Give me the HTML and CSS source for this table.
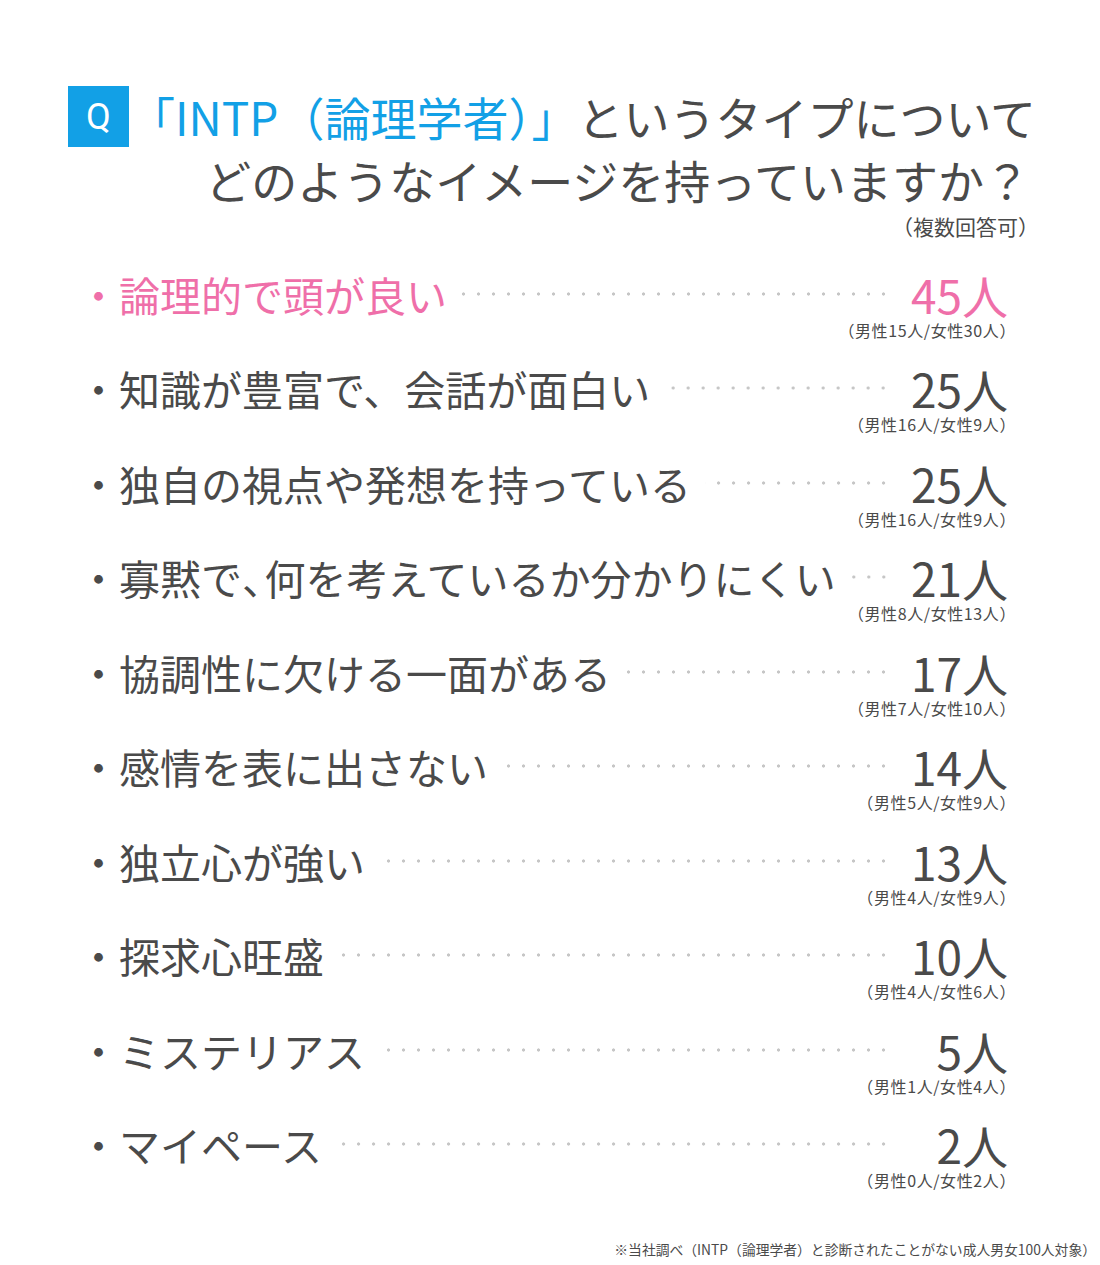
FILE: index.html
```html
<!DOCTYPE html>
<html lang="ja">
<head>
<meta charset="utf-8">
<title>INTP（論理学者）のイメージ</title>
<link rel="stylesheet" href="styles.css">
</head>
<body>
<div class="page">
  <div class="title">
    <div class="line1">
      <span class="qbox">Q</span>
      <span class="t1"><span class="blue">「INTP（論理学者）」</span>というタイプについて</span>
    </div>
    <div class="line2">どのようなイメージを持っていますか？</div>
    <div class="line3">（複数回答可）</div>
  </div>

  <div class="list">
    <div class="row hl">
      <div class="main"><span class="label">・論理的で頭が良い</span><span class="dots"></span><span class="count">45人</span></div>
      <div class="sub">（男性15人/女性30人）</div>
    </div>
    <div class="row">
      <div class="main"><span class="label">・知識が豊富で、会話が面白い</span><span class="dots"></span><span class="count">25人</span></div>
      <div class="sub">（男性16人/女性9人）</div>
    </div>
    <div class="row">
      <div class="main"><span class="label">・独自の視点や発想を持っている</span><span class="dots"></span><span class="count">25人</span></div>
      <div class="sub">（男性16人/女性9人）</div>
    </div>
    <div class="row">
      <div class="main"><span class="label">・寡黙で<span class="punct">、</span>何を考えているか分かりにくい</span><span class="dots"></span><span class="count">21人</span></div>
      <div class="sub">（男性8人/女性13人）</div>
    </div>
    <div class="row">
      <div class="main"><span class="label">・協調性に欠ける一面がある</span><span class="dots"></span><span class="count">17人</span></div>
      <div class="sub">（男性7人/女性10人）</div>
    </div>
    <div class="row">
      <div class="main"><span class="label">・感情を表に出さない</span><span class="dots"></span><span class="count">14人</span></div>
      <div class="sub">（男性5人/女性9人）</div>
    </div>
    <div class="row">
      <div class="main"><span class="label">・独立心が強い</span><span class="dots"></span><span class="count">13人</span></div>
      <div class="sub">（男性4人/女性9人）</div>
    </div>
    <div class="row">
      <div class="main"><span class="label">・探求心旺盛</span><span class="dots"></span><span class="count">10人</span></div>
      <div class="sub">（男性4人/女性6人）</div>
    </div>
    <div class="row">
      <div class="main"><span class="label">・ミステリアス</span><span class="dots"></span><span class="count">5人</span></div>
      <div class="sub">（男性1人/女性4人）</div>
    </div>
    <div class="row">
      <div class="main"><span class="label">・マイペース</span><span class="dots"></span><span class="count">2人</span></div>
      <div class="sub">（男性0人/女性2人）</div>
    </div>
  </div>

  <div class="note">※当社調べ（INTP（論理学者）と診断されたことがない成人男女100人対象）</div>
</div>
</body>
</html>
```

FILE: styles.css
```css
html, body {
  margin: 0;
  padding: 0;
  background: #ffffff;
}

body {
  font-family: "Noto Sans CJK JP", "Noto Sans", sans-serif;
  color: #4a4a4a;
  font-weight: 400;
}

.page {
  width: 1100px;
  height: 1265px;
  box-sizing: border-box;
  padding-top: 86px;
  overflow: hidden;
}

.title {
  margin-left: 68px;
  width: 962px;
}

.line1 {
  display: flex;
  align-items: center;
  justify-content: space-between;
  height: 61px;
}

.qbox {
  width: 61px;
  height: 61px;
  flex: none;
  background: #12a0e6;
  color: #ffffff;
  font-family: "Roboto", "Noto Sans", sans-serif;
  font-size: 36px;
  display: flex;
  align-items: center;
  justify-content: center;
}

.t1 {
  font-size: 46px;
  line-height: 61px;
  white-space: nowrap;
}

.blue {
  color: #12a0e6;
}

.line2 {
  margin-top: 4px;
  font-size: 46px;
  line-height: 56px;
  text-align: right;
  white-space: nowrap;
}

.line3 {
  margin-top: 7px;
  margin-right: -9px;
  font-size: 21px;
  line-height: 24px;
  text-align: right;
}

.list {
  margin-top: 30px;
  margin-left: 78px;
  width: 930px;
}

.row {
  height: 94.44px;
  display: flex;
  flex-direction: column;
}

.main {
  display: flex;
  align-items: center;
  height: 52px;
}

.label {
  font-size: 41px;
  line-height: 52px;
  white-space: nowrap;
}

.punct {
  letter-spacing: -0.45em;
}

.dots {
  flex: 1;
  height: 4px;
  margin-left: 14px;
  background-image: radial-gradient(circle, #c6c6c6 1.3px, rgba(255,255,255,0) 1.9px);
  background-size: 15px 4px;
  background-repeat: repeat-x;
  background-position: right center;
}

.count {
  width: 117px;
  flex: none;
  text-align: right;
  font-size: 46px;
  line-height: 46px;
  white-space: nowrap;
}

.sub {
  margin-right: -8px;
  text-align: right;
  font-size: 16px;
  letter-spacing: 0.6px;
  line-height: 20px;
  white-space: nowrap;
}

.hl .label,
.hl .count {
  color: #ef6fa9;
}

.note {
  margin-top: 27px;
  padding-right: 4px;
  text-align: right;
  font-size: 13.8px;
  line-height: 20px;
  white-space: nowrap;
}
```
